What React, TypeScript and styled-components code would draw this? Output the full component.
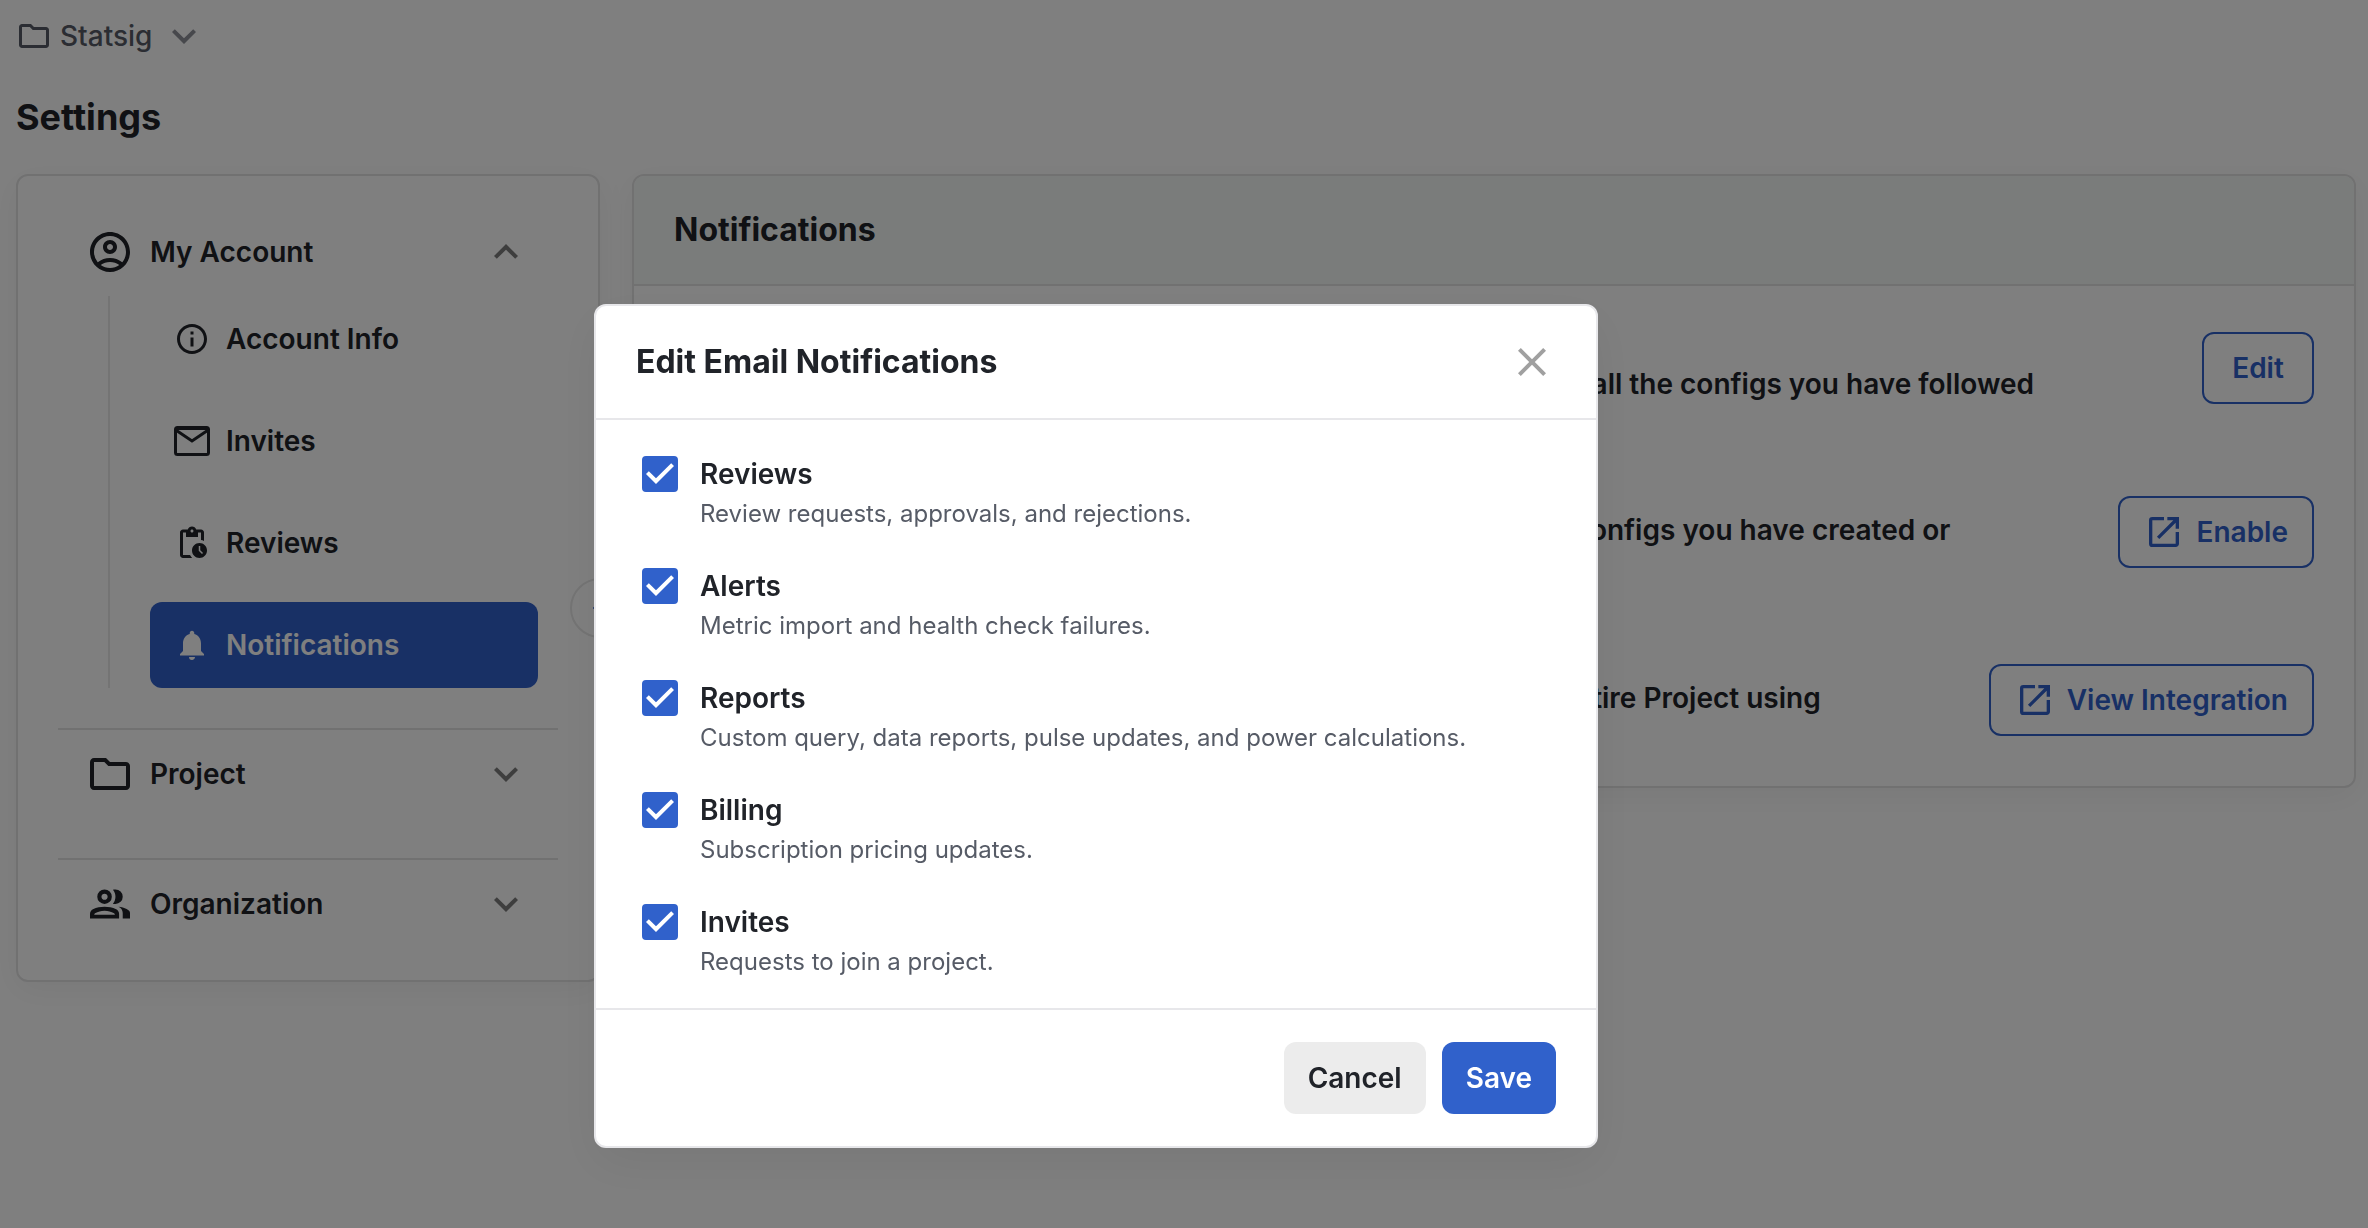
import React from "react";
import styled, { createGlobalStyle } from "styled-components";
import {
  MdOutlineFolder,
  MdOutlineInfo,
  MdPendingActions,
  MdNotifications,
  MdOutlineAccountCircle,
  MdExpandMore,
  MdExpandLess,
  MdOpenInNew,
  MdClose,
  MdCheckBox,
} from "react-icons/md";

const color = {
  text: "#202329",
  muted: "#565b66",
  border: "#e2e2e3",
  dialogBorder: "#e7e7ea",
  blue: "#3061cb",
  chevron: "#7d7d7d",
};

const GlobalStyle = createGlobalStyle`
  *, *::before, *::after { box-sizing: border-box; }
  body {
    margin: 0;
    background: #ffffff;
    color: ${color.text};
    font-family: Inter, "Liberation Sans", sans-serif;
    font-size: 28px;
    line-height: 40px;
  }
  h1, h2, p, ul { margin: 0; padding: 0; }
  button { font: inherit; color: inherit; cursor: pointer; }
  svg { display: block; flex: none; }
`;

const Page = styled.div`
  min-height: 100vh;
  padding: 16px 12px 16px 16px;
`;

const ProjectPicker = styled.button`
  display: flex;
  align-items: center;
  height: 40px;
  padding: 0;
  border: 0;
  background: none;
  color: ${color.muted};
  font-weight: 500;
`;

const PickerName = styled.span`
  margin: 0 8px;
`;

const PageTitle = styled.h1`
  margin: 40px 0 36px;
  font-size: 36px;
  line-height: 42px;
  font-weight: 700;
`;

const Columns = styled.div`
  display: flex;
  align-items: flex-start;
  gap: 32px;
`;

const Card = styled.section`
  border: 2px solid ${color.border};
  border-radius: 12px;
  background: #ffffff;
  box-shadow: 0 8px 32px rgba(0, 0, 0, 0.05);
`;

const Sidebar = styled(Card).attrs({ as: "nav" })`
  position: relative;
  flex: none;
  width: 584px;
  padding: 32px 40px;
`;

const Group = styled.div`
  & + & {
    margin-top: 40px;
    border-top: 2px solid ${color.border};
  }
`;

const GroupHeader = styled.button`
  display: flex;
  align-items: center;
  width: 100%;
  height: 88px;
  padding: 0 28px;
  border: 0;
  background: none;
  font-weight: 600;
  text-align: left;
`;

const GroupName = styled.span`
  flex: 1;
  padding-left: 16px;
`;

const SubMenu = styled.ul`
  display: flex;
  flex-direction: column;
  gap: 16px;
  margin: 0 20px 0 50px;
  padding-left: 40px;
  border-left: 2px solid #e8e8e8;
  list-style: none;
`;

const SubLink = styled.a<{ $active?: boolean }>`
  display: flex;
  align-items: center;
  gap: 16px;
  height: 86px;
  padding: 0 24px;
  border-radius: 12px;
  background: ${(p) => (p.$active ? color.blue : "transparent")};
  color: ${(p) => (p.$active ? "#ffffff" : color.text)};
  font-weight: 600;
  text-decoration: none;
`;

const CollapseButton = styled.button`
  position: absolute;
  top: 402px;
  right: -32px;
  display: grid;
  place-items: center;
  width: 60px;
  height: 60px;
  padding: 0;
  border: 2px solid #e8e8e8;
  border-radius: 50%;
  background: #ffffff;
  color: ${color.blue};
`;

const Panel = styled(Card)`
  flex: 1;
  overflow: hidden;
`;

const PanelHeader = styled.header`
  padding: 34px 40px;
  border-bottom: 2px solid ${color.border};
  background: #f5f9f7;
`;

const Heading = styled.h2`
  font-size: 32px;
  line-height: 40px;
  font-weight: 700;
`;

const PanelBody = styled.div`
  padding: 46px 40px;
`;

const Channel = styled.div`
  display: flex;
  align-items: flex-start;
  justify-content: flex-end;
  gap: 168px;
  & + & {
    margin-top: 92px;
  }
`;

const ChannelText = styled.p<{ $titled?: boolean }>`
  padding: ${(p) => (p.$titled ? "32px 0 0" : "14px 0 22px")};
  font-weight: 600;
`;

const Button = styled.button<{ $kind: "outline" | "primary" | "neutral" }>`
  display: inline-flex;
  align-items: center;
  justify-content: center;
  gap: 12px;
  min-width: 112px;
  height: 72px;
  padding: 0 24px;
  border: ${(p) => (p.$kind === "outline" ? `2px solid ${color.blue}` : "0")};
  border-radius: 12px;
  background: ${(p) =>
    ({ outline: "transparent", primary: color.blue, neutral: "#ececec" })[p.$kind]};
  color: ${(p) =>
    ({ outline: color.blue, primary: "#ffffff", neutral: color.text })[p.$kind]};
  font-weight: 600;
`;

const Backdrop = styled.div`
  position: fixed;
  inset: 0;
  display: flex;
  align-items: center;
  justify-content: center;
  padding: 224px 176px 0 0;
  background: rgba(0, 0, 0, 0.5);
`;

const Dialog = styled.form`
  width: 1004px;
  border: 2px solid ${color.dialogBorder};
  border-radius: 12px;
  background: #ffffff;
  box-shadow: 0 16px 48px rgba(0, 0, 0, 0.06);
`;

const DialogHeader = styled.header`
  display: flex;
  align-items: center;
  justify-content: space-between;
  height: 114px;
  padding: 0 40px;
  border-bottom: 2px solid ${color.dialogBorder};
`;

const CloseButton = styled.button`
  padding: 0;
  border: 0;
  background: none;
  color: #a0a0a0;
`;

const Options = styled.div`
  display: flex;
  flex-direction: column;
  gap: 32px;
  padding: 34px 40px 26px;
`;

const Option = styled.div`
  display: grid;
  grid-template-columns: 48px 1fr;
  column-gap: 16px;
`;

const Tick = styled.span`
  position: relative;
  display: flex;
  align-items: center;
  width: 48px;
  height: 40px;
  color: ${color.blue};
`;

const TickInput = styled.input`
  position: absolute;
  inset: 0;
  width: 100%;
  height: 100%;
  margin: 0;
  opacity: 0;
`;

const OptionName = styled.label`
  font-weight: 600;
`;

const OptionNote = styled.p`
  grid-column: 2;
  color: ${color.muted};
  font-size: 24px;
`;

const DialogFooter = styled.footer`
  display: flex;
  justify-content: flex-end;
  gap: 16px;
  padding: 32px 40px;
  border-top: 2px solid ${color.dialogBorder};
`;

const MailIcon = () => (
  <svg width="36" height="36" viewBox="0 0 36 36" fill="none" stroke="currentColor" strokeWidth="3">
    <rect x="1.5" y="4.5" width="33" height="27" rx="2" />
    <path d="M2.5 7.5 18 18 33.5 7.5" />
    <path d="M2 5.5h32" />
  </svg>
);

const PeopleIcon = () => (
  <svg width="48" height="48" viewBox="-48 -1008 1056 1056" fill="currentColor" fillRule="evenodd">
    <path d="M360-480q-66 0-113-47t-47-113q0-66 47-113t113-47q66 0 113 47t47 113q0 66-47 113t-113 47Zm0-92q28 0 48-20t20-48q0-28-20-48t-48-20q-28 0-48 20t-20 48q0 28 20 48t48 20Z" />
    <path d="M760-640q0 66-47 113t-113 47q-11 0-28-2.5t-28-5.5q27-32 41.5-71t14.5-81q0-42-14.5-81T544-792q14-5 28-6.5t28-1.5q66 0 113 47t47 113Z" />
    <path d="M40-160v-98q0-34 17.5-62.5T104-364q62-31 126-43.500T360-420q66 0 130 12.500T616-364q29 15 46.500 43.500T680-258v98H40Zm92-84h456q-2-20-18-32-50-28-100-40T360-330q-60 0-110 14t-100 40q-16 12-18 32Z" />
    <path d="M760-160v-120q0-44-24.500-84.500T666-422q51 6 96 18.500t84 31.500q36 20 55 42.500t19 49.500v120H760Z" />
  </svg>
);

const accountLinks = [
  { name: "Account Info", icon: <MdOutlineInfo size={36} /> },
  { name: "Invites", icon: <MailIcon /> },
  { name: "Reviews", icon: <MdPendingActions size={36} /> },
  { name: "Notifications", icon: <MdNotifications size={36} />, active: true },
];

const options = [
  { name: "Reviews", note: "Review requests, approvals, and rejections." },
  { name: "Alerts", note: "Metric import and health check failures." },
  { name: "Reports", note: "Custom query, data reports, pulse updates, and power calculations." },
  { name: "Billing", note: "Subscription pricing updates." },
  { name: "Invites", note: "Requests to join a project." },
];

export default function App() {
  return (
    <>
      <GlobalStyle />
      <Page>
        <ProjectPicker type="button">
          <MdOutlineFolder size={36} />
          <PickerName>Statsig</PickerName>
          <MdExpandMore size={48} color="#8e9099" />
        </ProjectPicker>
        <PageTitle>Settings</PageTitle>
        <Columns>
          <Sidebar>
            <Group>
              <GroupHeader type="button">
                <MdOutlineAccountCircle size={48} />
                <GroupName>My Account</GroupName>
                <MdExpandLess size={48} color={color.chevron} />
              </GroupHeader>
              <SubMenu>
                {accountLinks.map((link) => (
                  <li key={link.name}>
                    <SubLink href="#" $active={link.active}>
                      {link.icon}
                      {link.name}
                    </SubLink>
                  </li>
                ))}
              </SubMenu>
            </Group>
            <Group>
              <GroupHeader type="button">
                <MdOutlineFolder size={48} />
                <GroupName>Project</GroupName>
                <MdExpandMore size={48} color={color.chevron} />
              </GroupHeader>
            </Group>
            <Group>
              <GroupHeader type="button">
                <PeopleIcon />
                <GroupName>Organization</GroupName>
                <MdExpandMore size={48} color={color.chevron} />
              </GroupHeader>
            </Group>
            <CollapseButton type="button" aria-label="Collapse menu">
              <svg width="14" height="14" viewBox="0 0 16 16" fill="none" stroke="currentColor" strokeWidth="2">
                <path d="M8 1 1 8l7 7M1 8h14" />
              </svg>
            </CollapseButton>
          </Sidebar>
          <Panel>
            <PanelHeader>
              <Heading>Notifications</Heading>
            </PanelHeader>
            <PanelBody>
              <Channel>
                <ChannelText $titled>all the configs you have followed</ChannelText>
                <Button type="button" $kind="outline">Edit</Button>
              </Channel>
              <Channel>
                <ChannelText>configs you have created or</ChannelText>
                <Button type="button" $kind="outline">
                  <MdOpenInNew size={40} />
                  Enable
                </Button>
              </Channel>
              <Channel>
                <ChannelText>entire Project using</ChannelText>
                <Button type="button" $kind="outline">
                  <MdOpenInNew size={40} />
                  View Integration
                </Button>
              </Channel>
            </PanelBody>
          </Panel>
        </Columns>
      </Page>
      <Backdrop>
        <Dialog role="dialog" aria-modal="true" aria-labelledby="dialog-title">
          <DialogHeader>
            <Heading id="dialog-title">Edit Email Notifications</Heading>
            <CloseButton type="button" aria-label="Close">
              <MdClose size={48} />
            </CloseButton>
          </DialogHeader>
          <Options>
            {options.map((option) => (
              <Option key={option.name}>
                <Tick>
                  <MdCheckBox size={48} />
                  <TickInput type="checkbox" id={`opt-${option.name}`} defaultChecked />
                </Tick>
                <OptionName htmlFor={`opt-${option.name}`}>{option.name}</OptionName>
                <OptionNote>{option.note}</OptionNote>
              </Option>
            ))}
          </Options>
          <DialogFooter>
            <Button type="button" $kind="neutral">Cancel</Button>
            <Button type="button" $kind="primary">Save</Button>
          </DialogFooter>
        </Dialog>
      </Backdrop>
    </>
  );
}
